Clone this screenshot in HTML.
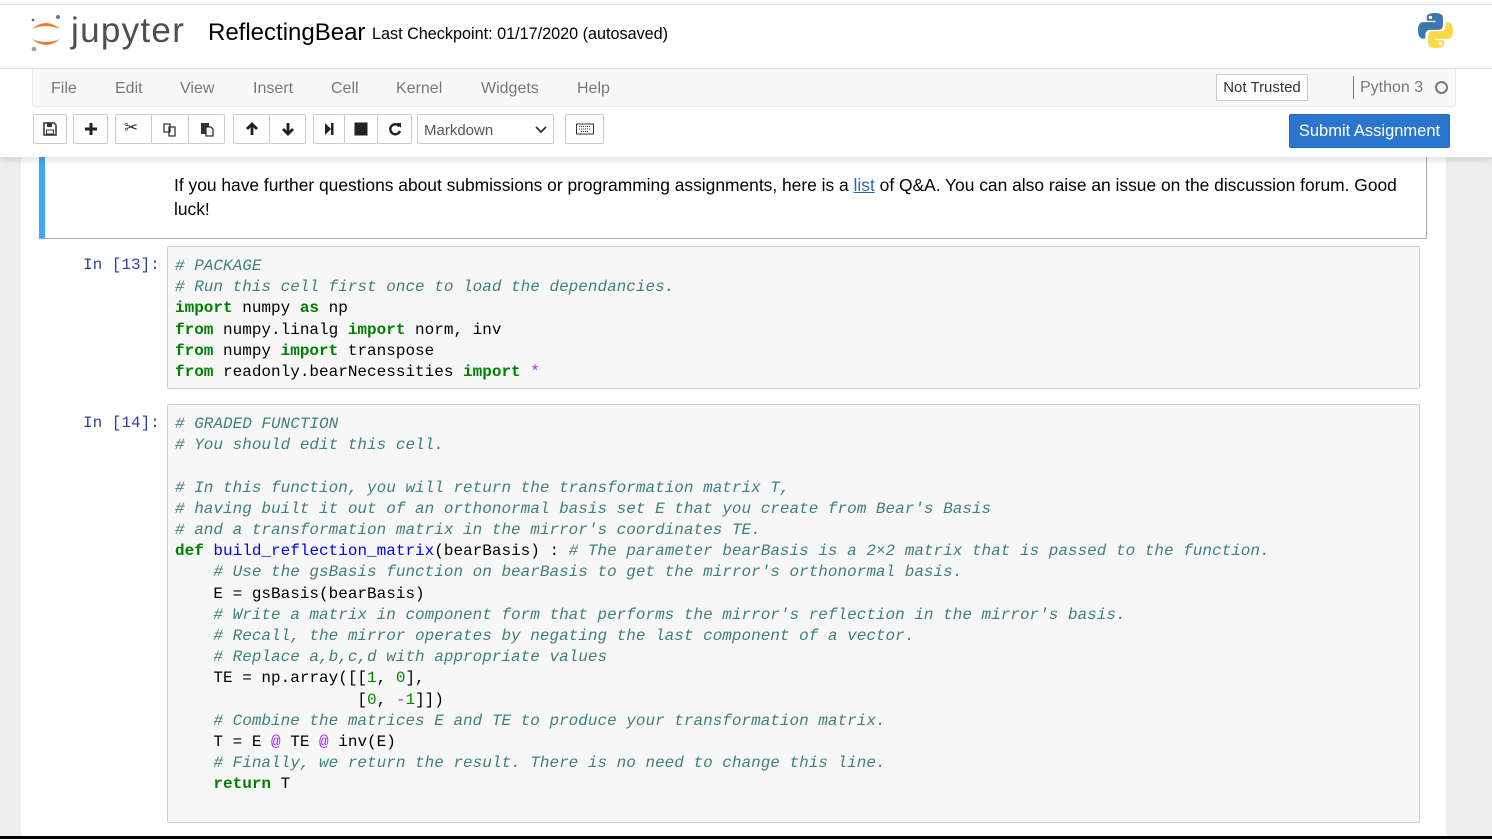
<!DOCTYPE html>
<html><head><meta charset="utf-8"><style>
*{box-sizing:border-box;margin:0;padding:0}
body{width:1492px;height:839px;overflow:hidden;background:#eee;font-family:"Liberation Sans",Arial,sans-serif;position:relative}
.abs{position:absolute}
#header{left:0;top:0;width:1492px;height:157px;background:#fff;box-shadow:0 2px 8px rgba(0,0,0,.15);z-index:5}
#topline{left:0;top:4px;width:1492px;height:1px;background:#e0e0e0}
#hline{left:0;top:68px;width:1492px;height:1px;background:#e0e0e0}
#menubar{left:32px;top:69px;width:1424px;height:38px;background:#f8f8f8;border:1px solid #e7e7e7;border-top:none;border-radius:0 0 3px 3px}
.menu{top:80px;font-size:16px;color:#777}
.btn{top:114px;height:30px;border:1px solid #ccc;background:#fff;border-radius:2px}
.btn svg{position:absolute;left:50%;top:50%;transform:translate(-50%,-50%)}
#panel{left:21px;top:150px;width:1425px;height:686px;background:#fff}
pre{font-family:"Liberation Mono",monospace;font-size:16px;line-height:21.2px;color:#000}
.c{color:#408080;font-style:italic}
.k{color:#008000;font-weight:bold}
.f{color:#0000ff}
.n{color:#080}
.o{color:#a2f}
.prompt{font-family:"Liberation Mono",monospace;font-size:16px;color:#303f9f;left:83px}
.input{left:167px;width:1253px;background:#f7f7f7;border:1px solid #cfcfcf;border-radius:2px}
</style></head><body>
<div class="abs" id="panel"></div>
<div class="abs" style="left:39px;top:150px;width:1388px;height:89px;border-right:1px solid #ababab;border-bottom:1px solid #ababab;border-left:6px solid #42a5f5;background:#fff"></div>
<div class="abs" style="left:174px;top:173px;width:1240px;font-size:17.4px;line-height:24px;color:#000">If you have further questions about submissions or programming assignments, here is a <span style="color:#296eaa;text-decoration:underline">list</span> of Q&amp;A. You can also raise an issue on the discussion forum. Good luck!</div>

<div class="abs prompt" style="top:256px">In [13]:</div>
<div class="abs input" style="top:246px;height:143px"><pre style="padding:9px 0 0 7px">
<span class="c"># PACKAGE</span>
<span class="c"># Run this cell first once to load the dependancies.</span>
<span class="k">import</span> numpy <span class="k">as</span> np
<span class="k">from</span> numpy.linalg <span class="k">import</span> norm, inv
<span class="k">from</span> numpy <span class="k">import</span> transpose
<span class="k">from</span> readonly.bearNecessities <span class="k">import</span> <span class="o">*</span></pre></div>

<div class="abs prompt" style="top:414px">In [14]:</div>
<div class="abs input" style="top:404px;height:419px"><pre style="padding:9px 0 0 7px">
<span class="c"># GRADED FUNCTION</span>
<span class="c"># You should edit this cell.</span>

<span class="c"># In this function, you will return the transformation matrix T,</span>
<span class="c"># having built it out of an orthonormal basis set E that you create from Bear's Basis</span>
<span class="c"># and a transformation matrix in the mirror's coordinates TE.</span>
<span class="k">def</span> <span class="f">build_reflection_matrix</span>(bearBasis) : <span class="c"># The parameter bearBasis is a 2×2 matrix that is passed to the function.</span>
    <span class="c"># Use the gsBasis function on bearBasis to get the mirror's orthonormal basis.</span>
    E = gsBasis(bearBasis)
    <span class="c"># Write a matrix in component form that performs the mirror's reflection in the mirror's basis.</span>
    <span class="c"># Recall, the mirror operates by negating the last component of a vector.</span>
    <span class="c"># Replace a,b,c,d with appropriate values</span>
    TE = np.array([[<span class="n">1</span>, <span class="n">0</span>],
                   [<span class="n">0</span>, <span class="o">-</span><span class="n">1</span>]])
    <span class="c"># Combine the matrices E and TE to produce your transformation matrix.</span>
    T = E <span class="o">@</span> TE <span class="o">@</span> inv(E)
    <span class="c"># Finally, we return the result. There is no need to change this line.</span>
    <span class="k">return</span> T</pre></div>

<div class="abs" style="left:0;top:836px;width:1492px;height:3px;background:#000"></div>

<div class="abs" id="header">
 <div class="abs" id="topline"></div>
 <div class="abs" id="hline"></div>
 <svg class="abs" style="left:28px;top:12px" width="36" height="42" viewBox="0 0 36 42">
  <path d="M4 17 Q18 5 32 17 Q18 11 4 17Z" fill="#f37726"/>
  <path d="M4 27 Q18 39 32 27 Q18 33 4 27Z" fill="#f37726"/>
  <circle cx="30" cy="5" r="2" fill="#767677"/><circle cx="6" cy="37" r="2.3" fill="#9e9e9e"/><circle cx="5" cy="8" r="1.3" fill="#616262"/>
 </svg>
 <div class="abs" style="left:71px;top:11px;font-size:35px;color:#4e4e4e;letter-spacing:1.3px">jupyter</div>
 <div class="abs" style="left:208px;top:19px;font-size:24px;color:#000">ReflectingBear</div>
 <div class="abs" style="left:372px;top:25px;font-size:16.2px;color:#000">Last Checkpoint: 01/17/2020 (autosaved)</div>
 <svg class="abs" style="left:1417px;top:12px" width="37" height="37" viewBox="0 0 110 110">
  <path d="M54 3c-26 0-25 11-25 11v12h26v4H19S3 28 3 54s14 25 14 25h8V67s0-14 14-14h25s13 0 13-13V17S79 3 54 3z" fill="#3d77a9"/>
  <circle cx="40" cy="16" r="5" fill="#fff"/>
  <path d="M56 107c26 0 25-11 25-11V84H55v-4h36s16 2 16-24-14-25-14-25h-8v12s0 14-14 14H46s-13 0-13 13v23s-2 14 23 14z" fill="#fcd846"/>
  <circle cx="70" cy="94" r="5" fill="#fff"/>
 </svg>
 <div class="abs" id="menubar"></div>
 <div class="abs menu" style="left:51px">File</div>
 <div class="abs menu" style="left:115px">Edit</div>
 <div class="abs menu" style="left:180px">View</div>
 <div class="abs menu" style="left:253px">Insert</div>
 <div class="abs menu" style="left:331px">Cell</div>
 <div class="abs menu" style="left:396px">Kernel</div>
 <div class="abs menu" style="left:481px">Widgets</div>
 <div class="abs menu" style="left:577px">Help</div>
 <div class="abs" style="left:1216px;top:74px;width:92px;height:27px;border:1px solid #ccc;background:#fff;font-size:15px;color:#333;text-align:center;line-height:25px">Not Trusted</div>
 <div class="abs" style="left:1353px;top:76px;width:1px;height:23px;background:#777"></div>
 <div class="abs" style="left:1360px;top:79px;font-size:16px;color:#777">Python 3</div>
 <div class="abs" style="left:1435px;top:81px;width:13px;height:13px;border:2px solid #777;border-radius:50%"></div>

 <div class="abs btn" style="left:33px;width:34px"><svg width="14" height="14" viewBox="0 0 14 14"><path d="M1 1h10l2 2v10H1z" fill="none" stroke="#333" stroke-width="1.5"/><rect x="4" y="1" width="5" height="4" fill="#333"/><rect x="3.5" y="8" width="7" height="4" fill="none" stroke="#333"/></svg></div>
 <div class="abs btn" style="left:73px;width:35px"><svg width="14" height="14"><path d="M7 1v12M1 7h12" stroke="#222" stroke-width="3"/></svg></div>
 <div class="abs btn" style="left:115px;width:37px"><span style="position:absolute;left:8px;top:3px;font-size:17px;color:#333">✂</span></div>
 <div class="abs btn" style="left:151px;width:38px"><svg width="16" height="16" viewBox="0 0 16 16"><path d="M2 3h6v8H2z M7 6h6v9H7z" fill="#fff" stroke="#333" stroke-width="1.3"/></svg></div>
 <div class="abs btn" style="left:188px;width:37px"><svg width="16" height="16" viewBox="0 0 16 16"><path d="M2 2h8v11H2z" fill="#333"/><path d="M7 6h5l2 2v7H7z" fill="#fff" stroke="#333" stroke-width="1.3"/></svg></div>
 <div class="abs btn" style="left:233px;width:37px"><svg width="14" height="14" viewBox="0 0 14 14"><path d="M7 13V2M2 7l5-5 5 5" fill="none" stroke="#222" stroke-width="2.8"/></svg></div>
 <div class="abs btn" style="left:269px;width:37px"><svg width="14" height="14" viewBox="0 0 14 14"><path d="M7 1v11M2 7l5 5 5-5" fill="none" stroke="#222" stroke-width="2.8"/></svg></div>
 <div class="abs btn" style="left:313px;width:32px"><svg width="12" height="14"><path d="M2 1l6 6-6 6z" fill="#222"/><rect x="8" y="1" width="2.5" height="12" fill="#222"/></svg></div>
 <div class="abs btn" style="left:344px;width:34px"><svg width="13" height="13"><rect width="13" height="13" fill="#222"/></svg></div>
 <div class="abs btn" style="left:377px;width:35px"><svg width="14" height="14" viewBox="0 0 14 14"><path d="M11.5 4.5A5 5 0 1 0 12 9" fill="none" stroke="#222" stroke-width="2.4"/><path d="M9 1l4 0 0 5z" fill="#222"/></svg></div>
 <div class="abs btn" style="left:417px;width:137px;font-size:15px;color:#555;line-height:31px;padding-left:6px">Markdown<svg style="left:auto;right:-2px;top:15px" width="14" height="10"><path d="M2 2l5 5 5-5" fill="none" stroke="#333" stroke-width="1.8"/></svg></div>
 <div class="abs btn" style="left:565px;width:39px"><svg width="18" height="11" viewBox="0 0 18 11"><rect x=".5" y=".5" width="17" height="10" fill="none" stroke="#333"/><path d="M3 3h12M3 5.5h12M5 8h8" stroke="#333" stroke-dasharray="1 1"/></svg></div>
 <div class="abs" style="left:1289px;top:114px;width:161px;height:34px;background:#2a75cd;border:1px solid #2a6bb8;border-radius:2px;color:#fff;font-size:16.5px;text-align:center;line-height:33px">Submit Assignment</div>
</div>
</body></html>
